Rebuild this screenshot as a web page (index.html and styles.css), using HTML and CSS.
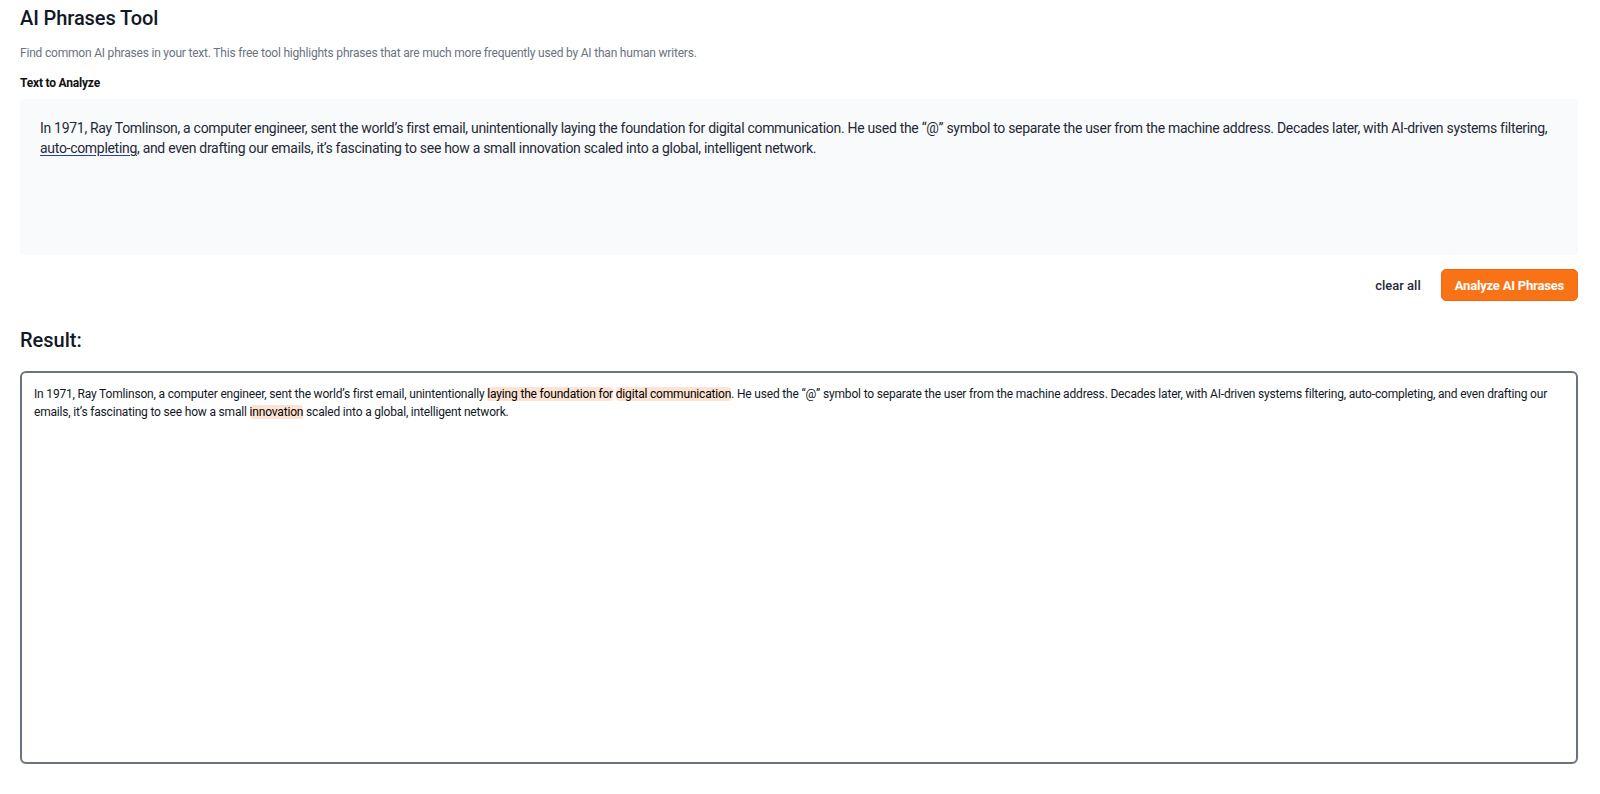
FILE: index.html
```html
<!DOCTYPE html>
<html lang="en">
<head>
    <meta charset="UTF-8">
    <meta name="viewport" content="width=device-width, initial-scale=1.0">
    <title>AI Phrases Tool</title>
    <link rel="stylesheet" href="styles.css">
</head>
<body>
    <div class="container">
        <h1>AI Phrases Tool</h1>
        <p class="intro">Find common AI phrases in your text. This free tool highlights phrases that are much more frequently used by AI than human writers.</p>

        <label class="field-label" for="source">Text to Analyze</label>
        <div class="source" id="source" contenteditable="true">In 1971, Ray Tomlinson, a computer engineer, sent the world’s first email, unintentionally laying the foundation for digital communication. He used the “@” symbol to separate the user from the machine address. Decades later, with AI-driven systems filtering, <span class="marked">auto-completing</span>, and even drafting our emails, it’s fascinating to see how a small innovation scaled into a global, intelligent network.</div>

        <div class="actions">
            <button class="btn-clear" type="button">clear all</button>
            <button class="btn-analyze" type="button">Analyze AI Phrases</button>
        </div>

        <h2>Result:</h2>
        <div class="result">In 1971, Ray Tomlinson, a computer engineer, sent the world’s first email, unintentionally <span class="hit">laying the foundation for</span> <span class="hit">digital communication</span>. He used the “@” symbol to separate the user from the machine address. Decades later, with AI-driven systems filtering, auto-completing, and even drafting our emails, it’s fascinating to see how a small <span class="hit">innovation</span> scaled into a global, intelligent network.</div>
    </div>
</body>
</html>
```
FILE: styles.css
```css
body {
    margin: 0;
    font-family: Roboto, "Liberation Sans", Arial, sans-serif;
    color: #1f2937;
    background-color: #fff;
}
.container {
    padding: 4px 22px 0 20px;
}
h1 {
    margin: 0;
    font-size: 20px;
    line-height: 28px;
    font-weight: 500;
    letter-spacing: -0.1px;
    color: #111827;
}
.intro {
    margin: 13px 0 0;
    font-size: 12px;
    line-height: 16px;
    letter-spacing: -0.2px;
    color: #6b7280;
}
.field-label {
    display: block;
    margin-top: 14px;
    font-size: 12px;
    line-height: 16px;
    font-weight: 700;
    letter-spacing: -0.2px;
    color: #111;
}
.source {
    margin-top: 8px;
    height: 156px;
    box-sizing: border-box;
    padding: 19px 20px 20px;
    background-color: #f9fafb;
    border-radius: 4px;
    font-size: 14px;
    line-height: 20px;
    letter-spacing: -0.3px;
    color: #1f2937;
    outline: none;
}
.marked {
    text-decoration: underline;
    text-decoration-color: #2b3bc4;
    text-underline-offset: 2px;
}
.actions {
    display: flex;
    justify-content: flex-end;
    align-items: center;
    gap: 20px;
    margin-top: 14px;
}
button {
    font-family: inherit;
    cursor: pointer;
}
.btn-clear {
    background: none;
    border: none;
    padding: 0;
    font-size: 13px;
    font-weight: 500;
    color: #1f2937;
}
.btn-analyze {
    height: 32px;
    padding: 0 13px;
    background-color: #f97316;
    border: 1px solid #ef6a12;
    border-radius: 5px;
    color: #fff;
    font-size: 13px;
    font-weight: 700;
    letter-spacing: -0.2px;
}
h2 {
    margin: 25px 0 0;
    font-size: 20px;
    line-height: 28px;
    font-weight: 500;
    color: #111827;
}
.result {
    margin-top: 17px;
    height: 393px;
    box-sizing: border-box;
    padding: 12px;
    border: 2px solid #6b7280;
    border-radius: 6px;
    box-shadow: 0 1px 2px rgba(0,0,0,0.06);
    font-size: 12px;
    line-height: 18px;
    letter-spacing: -0.18px;
    color: #111827;
}
.hit {
    background-color: #fde3d3;
    border-radius: 3px;
    color: #000;
}
```
